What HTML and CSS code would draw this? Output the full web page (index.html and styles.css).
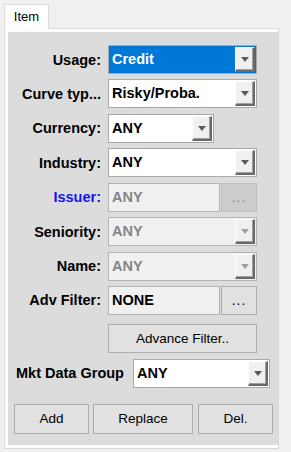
FILE: index.html
```html
<!doctype html>
<html lang="en">
  <head>
    <meta charset="UTF-8" />
    <title>Item</title>
    <link rel="stylesheet" href="styles.css">
  </head>
  <body>
    <div class="tabs">
      <div class="tab">Item</div>
    </div>

    <div class="panel">
      <div class="pane">
        <div class="form">
          <label class="label">Usage:</label>
          <div class="combo selected">
            <span class="value">Credit</span>
            <span class="drop"><i class="arrow"></i></span>
          </div>

          <label class="label">Curve typ...</label>
          <div class="combo">
            <span class="value">Risky/Proba.</span>
            <span class="drop"><i class="arrow"></i></span>
          </div>

          <label class="label">Currency:</label>
          <div class="combo short">
            <span class="value">ANY</span>
            <span class="drop"><i class="arrow"></i></span>
          </div>

          <label class="label">Industry:</label>
          <div class="combo">
            <span class="value">ANY</span>
            <span class="drop"><i class="arrow"></i></span>
          </div>

          <label class="label link">Issuer:</label>
          <div class="field-row">
            <div class="field disabled">ANY</div>
            <button class="dots" disabled>...</button>
          </div>

          <label class="label">Seniority:</label>
          <div class="combo disabled">
            <span class="value">ANY</span>
            <span class="drop"><i class="arrow"></i></span>
          </div>

          <label class="label">Name:</label>
          <div class="combo disabled">
            <span class="value">ANY</span>
            <span class="drop"><i class="arrow"></i></span>
          </div>

          <label class="label">Adv Filter:</label>
          <div class="field-row">
            <div class="field readonly">NONE</div>
            <button class="dots">...</button>
          </div>
        </div>

        <button class="btn advance">Advance Filter..</button>

        <div class="mkt-row">
          <label class="label">Mkt Data Group</label>
          <div class="combo mkt">
            <span class="value">ANY</span>
            <span class="drop"><i class="arrow"></i></span>
          </div>
        </div>

        <div class="actions">
          <button class="btn add">Add</button>
          <button class="btn replace">Replace</button>
          <button class="btn del">Del.</button>
        </div>
      </div>
    </div>
  </body>
</html>
```

FILE: styles.css
```css
* {
  box-sizing: border-box;
  margin: 0;
  padding: 0;
  font-family: 'Liberation Sans', Arial, sans-serif;
}

body {
  background-color: #f0f0f0;
  padding: 4px 0 0 4px;
}

.tabs {
  display: flex;
}

.tab {
  position: relative;
  z-index: 1;
  width: 45px;
  height: 25px;
  margin-bottom: -1px;
  background-color: #fff;
  border: 1px solid #d9d9d9;
  border-bottom: none;
  font-size: 13px;
  line-height: 23px;
  text-align: center;
  color: #000;
}

.panel {
  width: 275px;
  height: 421px;
  background-color: #fff;
  border: 1px solid #d9d9d9;
  padding: 3px 0 3px 3px;
}

.pane {
  height: 100%;
  background-color: #dcdcdc;
  padding-top: 13px;
}

.form {
  display: grid;
  grid-template-columns: 93px 149px;
  grid-auto-rows: 29px;
  column-gap: 7px;
  row-gap: 5.43px;
}

.label {
  display: flex;
  align-items: center;
  justify-content: flex-end;
  font-size: 14.5px;
  font-weight: bold;
  color: #000;
  white-space: nowrap;
}

.label.link {
  color: #1414f5;
}

/* combo box */
.combo {
  display: flex;
  height: 29px;
  background-color: #fff;
  border: 1px solid #a9a9a9;
}

.combo .value {
  flex: 1;
  padding-left: 3px;
  font-size: 14.5px;
  font-weight: bold;
  line-height: 27px;
  color: #000;
  white-space: nowrap;
  overflow: hidden;
}

.combo .drop {
  width: 20px;
  margin: 1px;
  display: flex;
  align-items: center;
  justify-content: center;
  background-color: #f0f0f0;
  border-top: 1px solid #fff;
  border-left: 1px solid #fff;
  border-right: 2px solid #696969;
  border-bottom: 2px solid #696969;
  box-shadow: inset -1px -1px 0 #a0a0a0;
}

.arrow {
  width: 0;
  height: 0;
  border-left: 4.5px solid transparent;
  border-right: 4.5px solid transparent;
  border-top: 5px solid #5a5a5a;
  margin-top: 1px;
}

.combo.selected {
  background-color: #0078d7;
}

.combo.selected .value {
  color: #fff;
}

.combo.short {
  width: 106px;
}

.combo.disabled {
  background-color: #f0f0f0;
  border-color: #b4b4b4;
}

.combo.disabled .value {
  color: #858585;
}

.combo.disabled .arrow {
  border-top-color: #a0a0a0;
}

/* text field with browse button */
.field-row {
  display: flex;
  gap: 1px;
}

.field {
  width: 112px;
  height: 29px;
  padding-left: 3px;
  border: 1px solid #b4b4b4;
  background-color: #f0f0f0;
  font-size: 14.5px;
  font-weight: bold;
  line-height: 27px;
}

.field.disabled {
  color: #858585;
}

.dots {
  width: 36px;
  height: 29px;
  background-color: #e1e1e1;
  border: 1px solid #adadad;
  font-size: 14px;
  color: #000;
  letter-spacing: 1px;
}

.dots:disabled {
  background-color: #cccccc;
  border-color: #bfbfbf;
  color: #8c8c8c;
}

/* buttons */
.btn {
  height: 30px;
  background-color: #e1e1e1;
  border: 1px solid #adadad;
  font-size: 13.5px;
  color: #000;
}

.advance {
  display: block;
  width: 149px;
  height: 29px;
  margin: 9px 0 0 100px;
}

.mkt-row {
  display: flex;
  justify-content: space-between;
  align-items: center;
  height: 29px;
  margin-top: 6px;
  padding: 0 8px;
}

.combo.mkt {
  width: 137px;
}

.actions {
  display: flex;
  margin-top: 16px;
  padding-left: 6px;
}

.add {
  width: 75px;
}

.replace {
  width: 100px;
  margin-left: 4px;
}

.del {
  width: 75px;
  margin-left: 5px;
}
```
